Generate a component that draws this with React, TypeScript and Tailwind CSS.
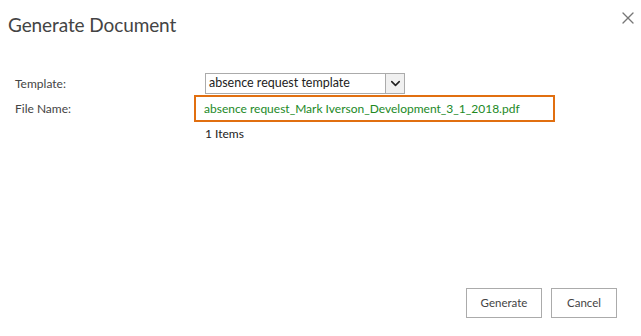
import { X, ChevronDown } from 'lucide-react'

const font = { fontFamily: 'Lato, "Liberation Sans", sans-serif' }

export default function App() {
    return (
        <div style={font} className="flex h-[336px] w-[641px] flex-col bg-white text-[#444]">
            {/* Header */}
            <div className="flex items-start justify-between pl-2 pr-[3px] pt-[11px]">
                <h1 className="text-[19px] leading-[28px] tracking-[-0.1px] text-[#444]">Generate Document</h1>
                <button className="-mt-[3px] text-[#777]">
                    <X size={20} strokeWidth={1.6} />
                </button>
            </div>

            {/* Form */}
            <div className="mt-[34px] flex flex-col pl-[15px] text-[12px]">
                <div className="flex h-[21px] items-center">
                    <label className="w-[190px]">Template:</label>
                    <div className="flex h-[21px] w-[200px] items-center border border-[#ababab] bg-white">
                        <span className="flex-1 whitespace-nowrap pl-[3px] text-[12.5px] text-[#222]">absence request template</span>
                        <span className="flex h-full w-[19px] items-center justify-center border-l border-[#ababab] bg-[#f0f0f0] text-[#222]">
                            <ChevronDown size={15} strokeWidth={2.5} />
                        </span>
                    </div>
                </div>
                <div className="mt-[1px] flex items-center">
                    <label className="w-[179px] whitespace-nowrap">File Name:</label>
                    <div className="flex h-[27px] w-[361px] items-center whitespace-nowrap border-2 border-[#e16f10] pl-[8px] text-[#22891f]">
                        absence request_Mark Iverson_Development_3_1_2018.pdf
                    </div>
                </div>
                <div className="mt-[3px] pl-[190px] text-[#222]">1 Items</div>
            </div>

            {/* Footer */}
            <div className="mt-auto flex justify-end gap-[9px] pb-[18px] pr-[24px]">
                <button className="h-[30px] w-[76px] border border-[#ababab] bg-white text-[11.5px] text-[#444]">Generate</button>
                <button className="h-[30px] w-[66px] border border-[#ababab] bg-white text-[11.5px] text-[#444]">Cancel</button>
            </div>
        </div>
    )
}
